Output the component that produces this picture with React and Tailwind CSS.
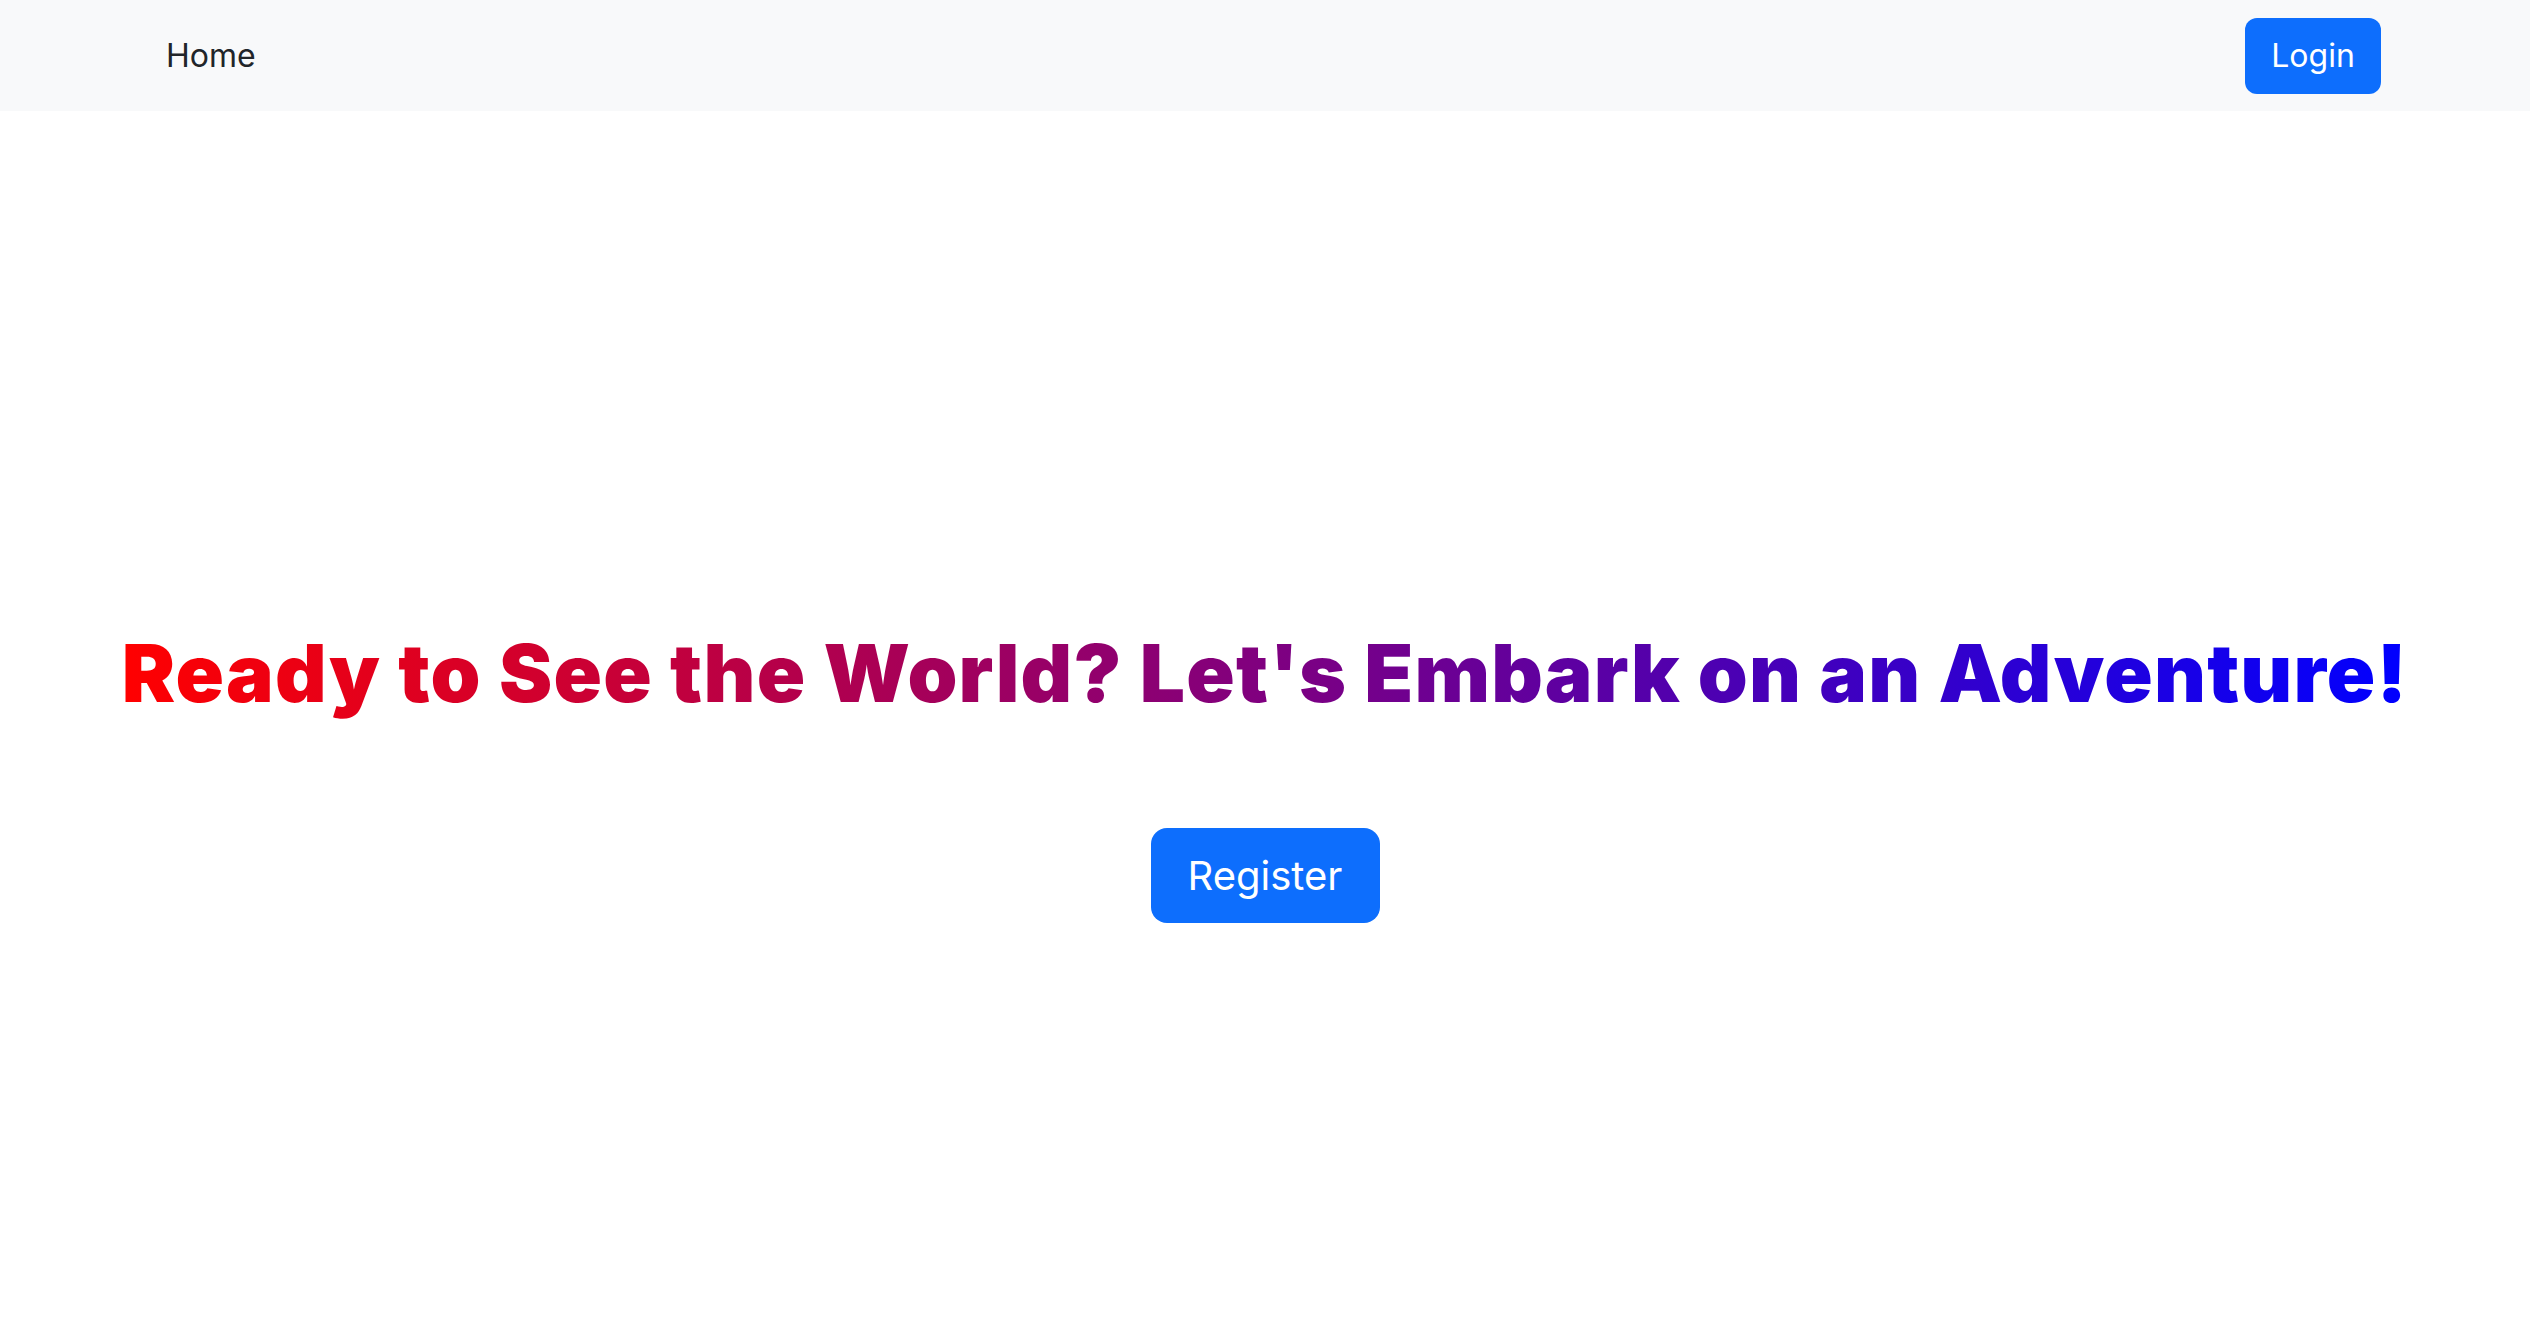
export default function App() {
  return (
    <div className="min-h-screen bg-white" style={{ fontFamily: "Inter, 'Noto Sans', sans-serif" }}>
      <nav className="h-[111px] bg-[#f8f9fa] flex items-center justify-between pl-[166px] pr-[149px]">
        <a href="#" className="text-[32px] text-[#212529]">Home</a>
        <button className="w-[136px] h-[76px] rounded-[12px] bg-[#0d6efd] text-white text-[32px]">
          Login
        </button>
      </nav>

      <main className="flex flex-col items-center">
        <h1 className="mt-[514px] text-[80px] leading-[96px] font-black tracking-[1.2px] bg-[linear-gradient(to_right,#ff0000,#0000ff)] bg-clip-text text-transparent">
          Ready to See the World? Let's Embark on an Adventure!
        </h1>
        <button className="mt-[107px] w-[229px] h-[95px] rounded-[16px] bg-[#0d6efd] text-white text-[40px]">
          Register
        </button>
      </main>
    </div>
  );
}
